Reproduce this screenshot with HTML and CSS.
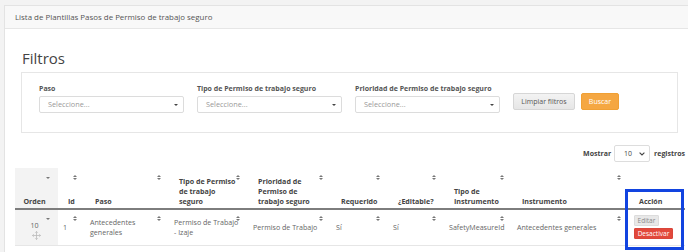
FILE: index.html
```html
<!DOCTYPE html>
<html>

<head>
    <title>Pasos de Permiso de trabajo seguro</title>
    <link rel="stylesheet" href="styles.css">
</head>

<body>
    <div class="panel">
        <div class="panel-heading">Lista de Plantillas Pasos de Permiso de trabajo seguro</div>
        <div class="panel-body">
            <h2 class="filters-title">Filtros</h2>
            <div class="filter-box">
                <div class="filter-group">
                    <label>Paso</label>
                    <div class="fake-select">Seleccione...<span class="caret"></span></div>
                </div>
                <div class="filter-group">
                    <label>Tipo de Permiso de trabajo seguro</label>
                    <div class="fake-select">Seleccione...<span class="caret"></span></div>
                </div>
                <div class="filter-group">
                    <label>Prioridad de Permiso de trabajo seguro</label>
                    <div class="fake-select">Seleccione...<span class="caret"></span></div>
                </div>
                <button class="btn btn-default" type="button">Limpiar filtros</button>
                <button class="btn btn-warning" type="button">Buscar</button>
            </div>

            <div class="length-row">
                <span>Mostrar</span>
                <div class="length-select">10
                    <svg width="6" height="4" viewBox="0 0 6 4"><path d="M0.6 0.6 L3 3 L5.4 0.6" fill="none" stroke="#444" stroke-width="1.1"/></svg>
                </div>
                <span>registros</span>
            </div>

            <div class="table-wrap">
                <table class="data-table">
                    <colgroup>
                        <col style="width:43px">
                        <col style="width:27px">
                        <col style="width:84px">
                        <col style="width:79px">
                        <col style="width:83px">
                        <col style="width:57px">
                        <col style="width:56px">
                        <col style="width:68px">
                        <col style="width:117px">
                        <col style="width:56px">
                    </colgroup>
                    <thead>
                        <tr>
                            <th class="col-order">Orden<span class="sort-desc"></span></th>
                            <th>Id<span class="sort"></span></th>
                            <th>Paso<span class="sort"></span></th>
                            <th>Tipo de Permiso de trabajo seguro<span class="sort"></span></th>
                            <th>Prioridad de Permiso de trabajo seguro<span class="sort"></span></th>
                            <th>Requerido<span class="sort"></span></th>
                            <th>¿Editable?<span class="sort"></span></th>
                            <th>Tipo de Instrumento<span class="sort"></span></th>
                            <th>Instrumento<span class="sort"></span></th>
                            <th class="col-action">Acción</th>
                        </tr>
                    </thead>
                    <tbody>
                        <tr>
                            <td class="col-order">
                                <div>10</div>
                                <svg class="move-icon" width="9" height="9" viewBox="0 0 10 10">
                                    <path d="M5 0.5 V9.5 M0.5 5 H9.5 M3.6 1.9 L5 0.5 L6.4 1.9 M3.6 8.1 L5 9.5 L6.4 8.1 M1.9 3.6 L0.5 5 L1.9 6.4 M8.1 3.6 L9.5 5 L8.1 6.4" fill="none" stroke="#bbb" stroke-width="0.9"/>
                                </svg>
                                <span class="sort-desc"></span>
                            </td>
                            <td>1<span class="sort"></span></td>
                            <td>Antecedentes generales<span class="sort"></span></td>
                            <td class="tight">Permiso&nbsp;de&nbsp;Trabajo -&nbsp;Izaje<span class="sort"></span></td>
                            <td>Permiso de Trabajo<span class="sort"></span></td>
                            <td>Sí<span class="sort"></span></td>
                            <td>Sí<span class="sort"></span></td>
                            <td>SafetyMeasureId<span class="sort"></span></td>
                            <td>Antecedentes generales<span class="sort"></span></td>
                            <td class="col-action">
                                <button class="btn-xs btn-edit" type="button">Editar</button>
                                <button class="btn-xs btn-danger" type="button">Desactivar</button>
                            </td>
                        </tr>
                    </tbody>
                </table>
                <div class="highlight"></div>
            </div>
        </div>
    </div>
</body>

</html>
```

FILE: styles.css
```css
body {
    font-family: "Open Sans", "DejaVu Sans", sans-serif;
    margin: 0;
    padding: 5px 0 0 4px;
    background-color: #f3f3f3;
    color: #555;
    overflow: hidden;
    height: 252px;
    box-sizing: border-box;
}

.panel {
    width: 720px;
    background: #fff;
    border-top: 1px solid #e3e3e3;
    border-left: 1px solid #e3e3e3;
    min-height: 300px;
}

.panel-heading {
    height: 22px;
    line-height: 22px;
    padding-left: 10px;
    background: #f8f8f8;
    border-bottom: 1px solid #e6e6e6;
    font-size: 7.9px;
    color: #555;
}

.panel-body {
    width: 670px;
    padding-left: 10px;
}

.filters-title {
    margin: 20px 0 5px 7px;
    font-size: 15px;
    line-height: 18px;
    font-weight: 400;
    color: #444;
}

.filter-box {
    margin-left: 6px;
    width: 657px;
    height: 61px;
    box-sizing: border-box;
    border: 1px solid #e6e6e6;
    display: flex;
    align-items: flex-end;
    gap: 13px;
    padding: 0 0 19px 17px;
}

.filter-group {
    display: flex;
    flex-direction: column;
    gap: 2px;
}

.filter-group label {
    font-size: 7px;
    line-height: 10px;
    font-weight: 700;
    color: #555;
    white-space: nowrap;
}

.fake-select {
    position: relative;
    width: 145px;
    height: 17px;
    box-sizing: border-box;
    border: 1px solid #dcdcdc;
    border-radius: 2px;
    padding-left: 8px;
    font-size: 7.3px;
    line-height: 15px;
    color: #999;
}

.caret {
    position: absolute;
    right: 5px;
    top: 7px;
    border-left: 2px solid transparent;
    border-right: 2px solid transparent;
    border-top: 2px solid #444;
}

.btn {
    height: 17px;
    margin-bottom: 3px;
    border-radius: 2px;
    font-family: inherit;
    font-size: 7px;
    padding: 0;
    cursor: pointer;
    flex-shrink: 0;
}

.btn-default {
    width: 62px;
    background: linear-gradient(#f3f3f3, #e6e6e6);
    border: 1px solid #d6d6d6;
    color: #555;
}

.btn-warning {
    width: 38px;
    margin-left: -7px;
    background: #f5a742;
    border: 1px solid #f0a035;
    color: #fff;
}

.length-row {
    margin-top: 12px;
    display: flex;
    justify-content: flex-end;
    align-items: center;
    gap: 3px;
    font-size: 7px;
    font-weight: 700;
    color: #444;
    height: 17px;
}

.length-select {
    width: 36px;
    height: 17px;
    box-sizing: border-box;
    border: 1px solid #ddd;
    border-radius: 2px;
    display: flex;
    justify-content: space-between;
    align-items: center;
    padding: 0 4px 0 9px;
    font-weight: 400;
    margin-right: 1px;
}

.table-wrap {
    position: relative;
    margin-top: 6px;
}

.data-table {
    width: 670px;
    table-layout: fixed;
    border-collapse: collapse;
    font-size: 7.1px;
    line-height: 10px;
}

.data-table th {
    position: relative;
    height: 30px;
    padding: 8px 10px 2px 10px;
    vertical-align: bottom;
    text-align: left;
    font-weight: 700;
    color: #444;
    border-bottom: 2px solid #7d7d7d;
}

.data-table td {
    position: relative;
    height: 36px;
    padding: 0 10px 0 5px;
    box-sizing: border-box;
    vertical-align: middle;
    color: #666;
    border-bottom: 1px solid #e6e6e6;
}

.data-table td.tight {
    padding-right: 6px;
}

.data-table tbody tr td {
    border-top: 1px solid #fff;
}

.data-table .col-order {
    background: #f3f3f3;
    text-align: center;
    padding-left: 0;
    padding-right: 4px;
}

.data-table td.col-order {
    padding-top: 5px;
}

.move-icon {
    display: block;
    margin: 1px auto 0;
    position: relative;
    left: 2px;
}

.sort,
.sort-desc {
    position: absolute;
    right: 8px;
    top: 7px;
    width: 4px;
    height: 6px;
}

.sort::before,
.sort::after,
.sort-desc::after {
    content: "";
    position: absolute;
    left: 0;
    border-left: 2px solid transparent;
    border-right: 2px solid transparent;
}

.sort::before {
    top: 0;
    border-bottom: 2px solid #777;
}

.sort::after {
    top: 3px;
    border-top: 2px solid #777;
}

.sort-desc::after {
    top: 2px;
    border-top: 2px solid #777;
}

.data-table td .sort,
.data-table td .sort-desc {
    top: 6px;
}

.col-action .btn-xs {
    display: block;
    padding: 0;
    font-family: inherit;
    font-size: 6.5px;
    height: 11px;
    line-height: 9px;
    border-radius: 1px;
    cursor: pointer;
}

.btn-edit {
    width: 25px;
    background: #e8e8e8;
    border: 1px solid #dcdcdc;
    color: #888;
    margin-bottom: 2px;
}

.btn-danger {
    width: 39px;
    background: #e2483b;
    border: 1px solid #d9463b;
    color: #fff;
}

.highlight {
    position: absolute;
    left: 610px;
    top: 21px;
    width: 53px;
    height: 55px;
    border: 3px solid #1244e0;
}
```
